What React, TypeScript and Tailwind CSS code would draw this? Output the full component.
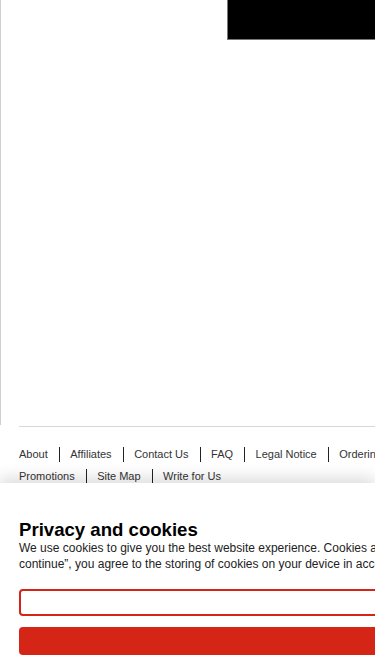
import React from 'react';

const row1 = ['About', 'Affiliates', 'Contact Us', 'FAQ', 'Legal Notice', 'Ordering', 'Privacy'];
const row2 = ['Promotions', 'Site Map', 'Write for Us'];

const LinkRow: React.FC<{ items: string[] }> = ({ items }) => (
  <div className="flex h-[22px] items-center whitespace-nowrap text-[11px] text-[#333]">
    {items.map((item, index) => (
      <React.Fragment key={item}>
        {index > 0 && <span className="ml-[11px] mr-[10.5px] h-[15px] w-px shrink-0 bg-[#222]" />}
        <a className="shrink-0">{item}</a>
      </React.Fragment>
    ))}
  </div>
);

export default function App() {
  return (
    <div className="relative h-[667px] w-[375px] overflow-hidden bg-white font-['Liberation_Sans',Arial,sans-serif]">
      <div className="h-[425px] border-l border-[#cfcfcf]">
        <div className="ml-[226px] h-[40px] w-[300px] border-b border-l border-[#777] bg-black" />
      </div>

      <div className="ml-[19px] mt-px h-px w-[600px] bg-[#d8d8d8]" />

      <div className="ml-[19px] mt-[16px]">
        <LinkRow items={row1} />
        <LinkRow items={row2} />
      </div>

      {/* cookie banner */}
      <div className="absolute inset-x-0 bottom-0 h-[184px] bg-white pl-[19px] pt-[36px] shadow-[0_-6px_14px_rgba(0,0,0,0.13)]">
        <div className="w-[600px]">
          <h2 className="text-[18.6px] font-bold leading-[21px] text-black">Privacy and cookies</h2>
          <p className="whitespace-nowrap text-[12px] leading-[16px] text-[#222]">
            We use cookies to give you the best website experience. Cookies are files stored in your browser.
            <br />
            continue”, you agree to the storing of cookies on your device in accordance with our policy.
          </p>
          <button className="mt-[17px] block h-[27px] w-[560px] rounded-[4px] border-2 border-[#d52516] bg-white" />
          <button className="mt-[11px] block h-[28px] w-[560px] rounded-[4px] bg-[#d52516]" />
        </div>
      </div>
    </div>
  );
}
